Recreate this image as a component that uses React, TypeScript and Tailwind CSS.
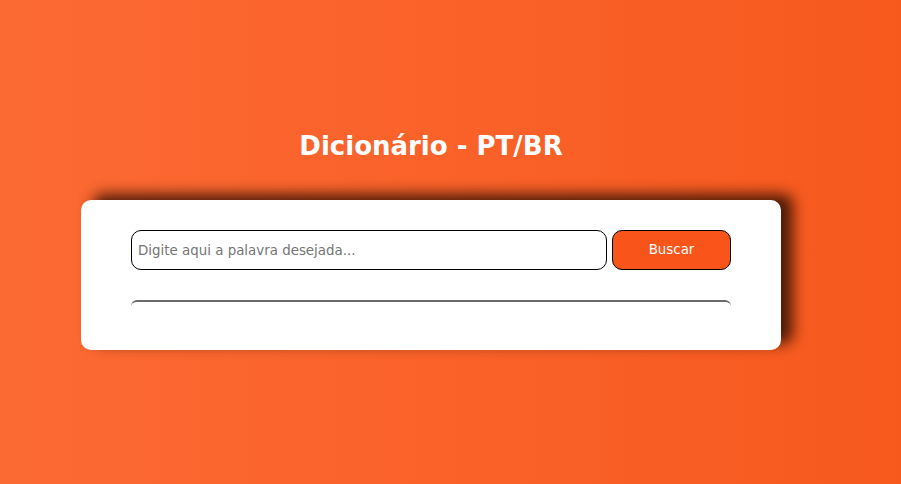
export default function App() {
  return (
    <main className="min-h-[484px] w-full bg-gradient-to-r from-[#fc6a33] to-[#f7591d] font-['DejaVu_Sans',Verdana,sans-serif] pt-[130px]">
      <div className="ml-[81px] w-[700px] flex flex-col items-center">
        <h1 className="text-white text-[26px] font-bold leading-[32px] mb-[38px]">
          Dicionário - PT/BR
        </h1>
        <section className="w-full h-[150px] bg-white rounded-[10px] shadow-[12px_-6px_14px_rgba(60,20,5,0.9)] px-[50px] pt-[30px]">
          <div className="flex gap-[5px]">
            <input
              type="text"
              placeholder="Digite aqui a palavra desejada..."
              className="w-[476px] h-10 border border-black rounded-[10px] px-[6px] text-[13.4px] text-black placeholder:text-[#757575] outline-none"
            />
            <button className="w-[119px] h-10 bg-[#f9541a] border border-black rounded-[10px] text-white text-[13.4px]">
              Buscar
            </button>
          </div>
          <div className="mt-[30px] h-[6px] border-t-2 border-[#6b6b6b] rounded-t-[8px]" />
        </section>
      </div>
    </main>
  );
}
